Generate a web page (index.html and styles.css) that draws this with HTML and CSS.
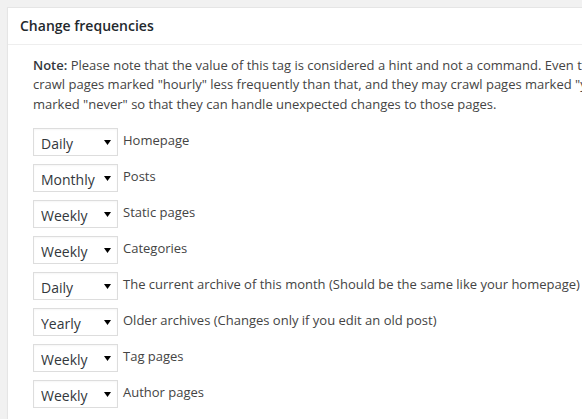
FILE: index.html
```html
<!DOCTYPE html>
<html lang="en">
<head>
    <meta charset="UTF-8">
    <meta name="viewport" content="width=device-width, initial-scale=1.0">
    <title>Change frequencies</title>
    <link rel="stylesheet" href="styles.css">
</head>
<body>
    <div class="wrap">
        <div class="postbox">
            <h2 class="hndle">Change frequencies</h2>
            <div class="inside">
                <p class="note">
                    <b>Note:</b> Please note that the value of this tag is considered a hint and not a command. Even though search engine crawlers consider this information when making decisions, they may<br>
                    crawl pages marked "hourly" less frequently than that, and they may crawl pages marked "yearly" more frequently than that. It is also likely that crawlers will periodically crawl pages<br>
                    marked "never" so that they can handle unexpected changes to those pages.
                </p>
                <ul class="freq-list">
                    <li>
                        <select class="freq-select">
                            <option>Always</option><option>Hourly</option><option selected>Daily</option><option>Weekly</option><option>Monthly</option><option>Yearly</option><option>Never</option>
                        </select>
                        <label>Homepage</label>
                    </li>
                    <li>
                        <select class="freq-select">
                            <option>Always</option><option>Hourly</option><option>Daily</option><option>Weekly</option><option selected>Monthly</option><option>Yearly</option><option>Never</option>
                        </select>
                        <label>Posts</label>
                    </li>
                    <li>
                        <select class="freq-select">
                            <option>Always</option><option>Hourly</option><option>Daily</option><option selected>Weekly</option><option>Monthly</option><option>Yearly</option><option>Never</option>
                        </select>
                        <label>Static pages</label>
                    </li>
                    <li>
                        <select class="freq-select">
                            <option>Always</option><option>Hourly</option><option>Daily</option><option selected>Weekly</option><option>Monthly</option><option>Yearly</option><option>Never</option>
                        </select>
                        <label>Categories</label>
                    </li>
                    <li>
                        <select class="freq-select">
                            <option>Always</option><option>Hourly</option><option selected>Daily</option><option>Weekly</option><option>Monthly</option><option>Yearly</option><option>Never</option>
                        </select>
                        <label>The current archive of this month (Should be the same like your homepage)</label>
                    </li>
                    <li>
                        <select class="freq-select">
                            <option>Always</option><option>Hourly</option><option>Daily</option><option>Weekly</option><option>Monthly</option><option selected>Yearly</option><option>Never</option>
                        </select>
                        <label>Older archives (Changes only if you edit an old post)</label>
                    </li>
                    <li>
                        <select class="freq-select">
                            <option>Always</option><option>Hourly</option><option>Daily</option><option selected>Weekly</option><option>Monthly</option><option>Yearly</option><option>Never</option>
                        </select>
                        <label>Tag pages</label>
                    </li>
                    <li>
                        <select class="freq-select">
                            <option>Always</option><option>Hourly</option><option>Daily</option><option selected>Weekly</option><option>Monthly</option><option>Yearly</option><option>Never</option>
                        </select>
                        <label>Author pages</label>
                    </li>
                </ul>
            </div>
        </div>
    </div>
</body>
</html>
```

FILE: styles.css
```css
html, body {
    overflow: hidden;
}
body {
    margin: 0;
    background: #f1f1f1;
    font-family: 'Open Sans', Arial, sans-serif;
    font-size: 13px;
    color: #444444;
}
.wrap {
    padding: 7px 0 0 7px;
}
.postbox {
    width: 1400px;
    min-height: 440px;
    background: #ffffff;
    border: 1px solid #e5e5e5;
    box-shadow: 0 1px 1px rgba(0, 0, 0, 0.04);
}
.hndle {
    margin: 0;
    padding: 8px 12px;
    font-size: 14px;
    line-height: 1.4;
    font-weight: 600;
    color: #23282d;
    border-bottom: 1px solid #eeeeee;
}
.inside {
    margin-top: 11px;
    padding: 0 12px 12px 25px;
}
.note {
    margin: 0;
    line-height: 1.5;
    white-space: nowrap;
}
.note b {
    font-weight: 600;
    color: #32373c;
}
.freq-list {
    list-style: none;
    margin: 14px 0 0;
    padding: 0;
    display: flex;
    flex-direction: column;
    gap: 8px;
}
.freq-list li {
    display: flex;
    align-items: flex-start;
}
.freq-list label {
    margin: 3px 0 0 5px;
    line-height: 1.5;
    white-space: nowrap;
}
.freq-select {
    -webkit-appearance: none;
    appearance: none;
    width: 85px;
    height: 28px;
    margin: 0;
    padding: 2px 0 0 7px;
    border: 1px solid #dddddd;
    border-radius: 0;
    box-shadow: inset 0 1px 2px rgba(0, 0, 0, 0.04);
    font-family: 'Open Sans', Arial, sans-serif;
    font-size: 14px;
    color: #32373c;
    background: #ffffff url("data:image/svg+xml;utf8,<svg xmlns='http://www.w3.org/2000/svg' width='7' height='5'><path d='M0 0h7L3.5 5z' fill='black'/></svg>") no-repeat right 6px center;
    outline: none;
}
```
